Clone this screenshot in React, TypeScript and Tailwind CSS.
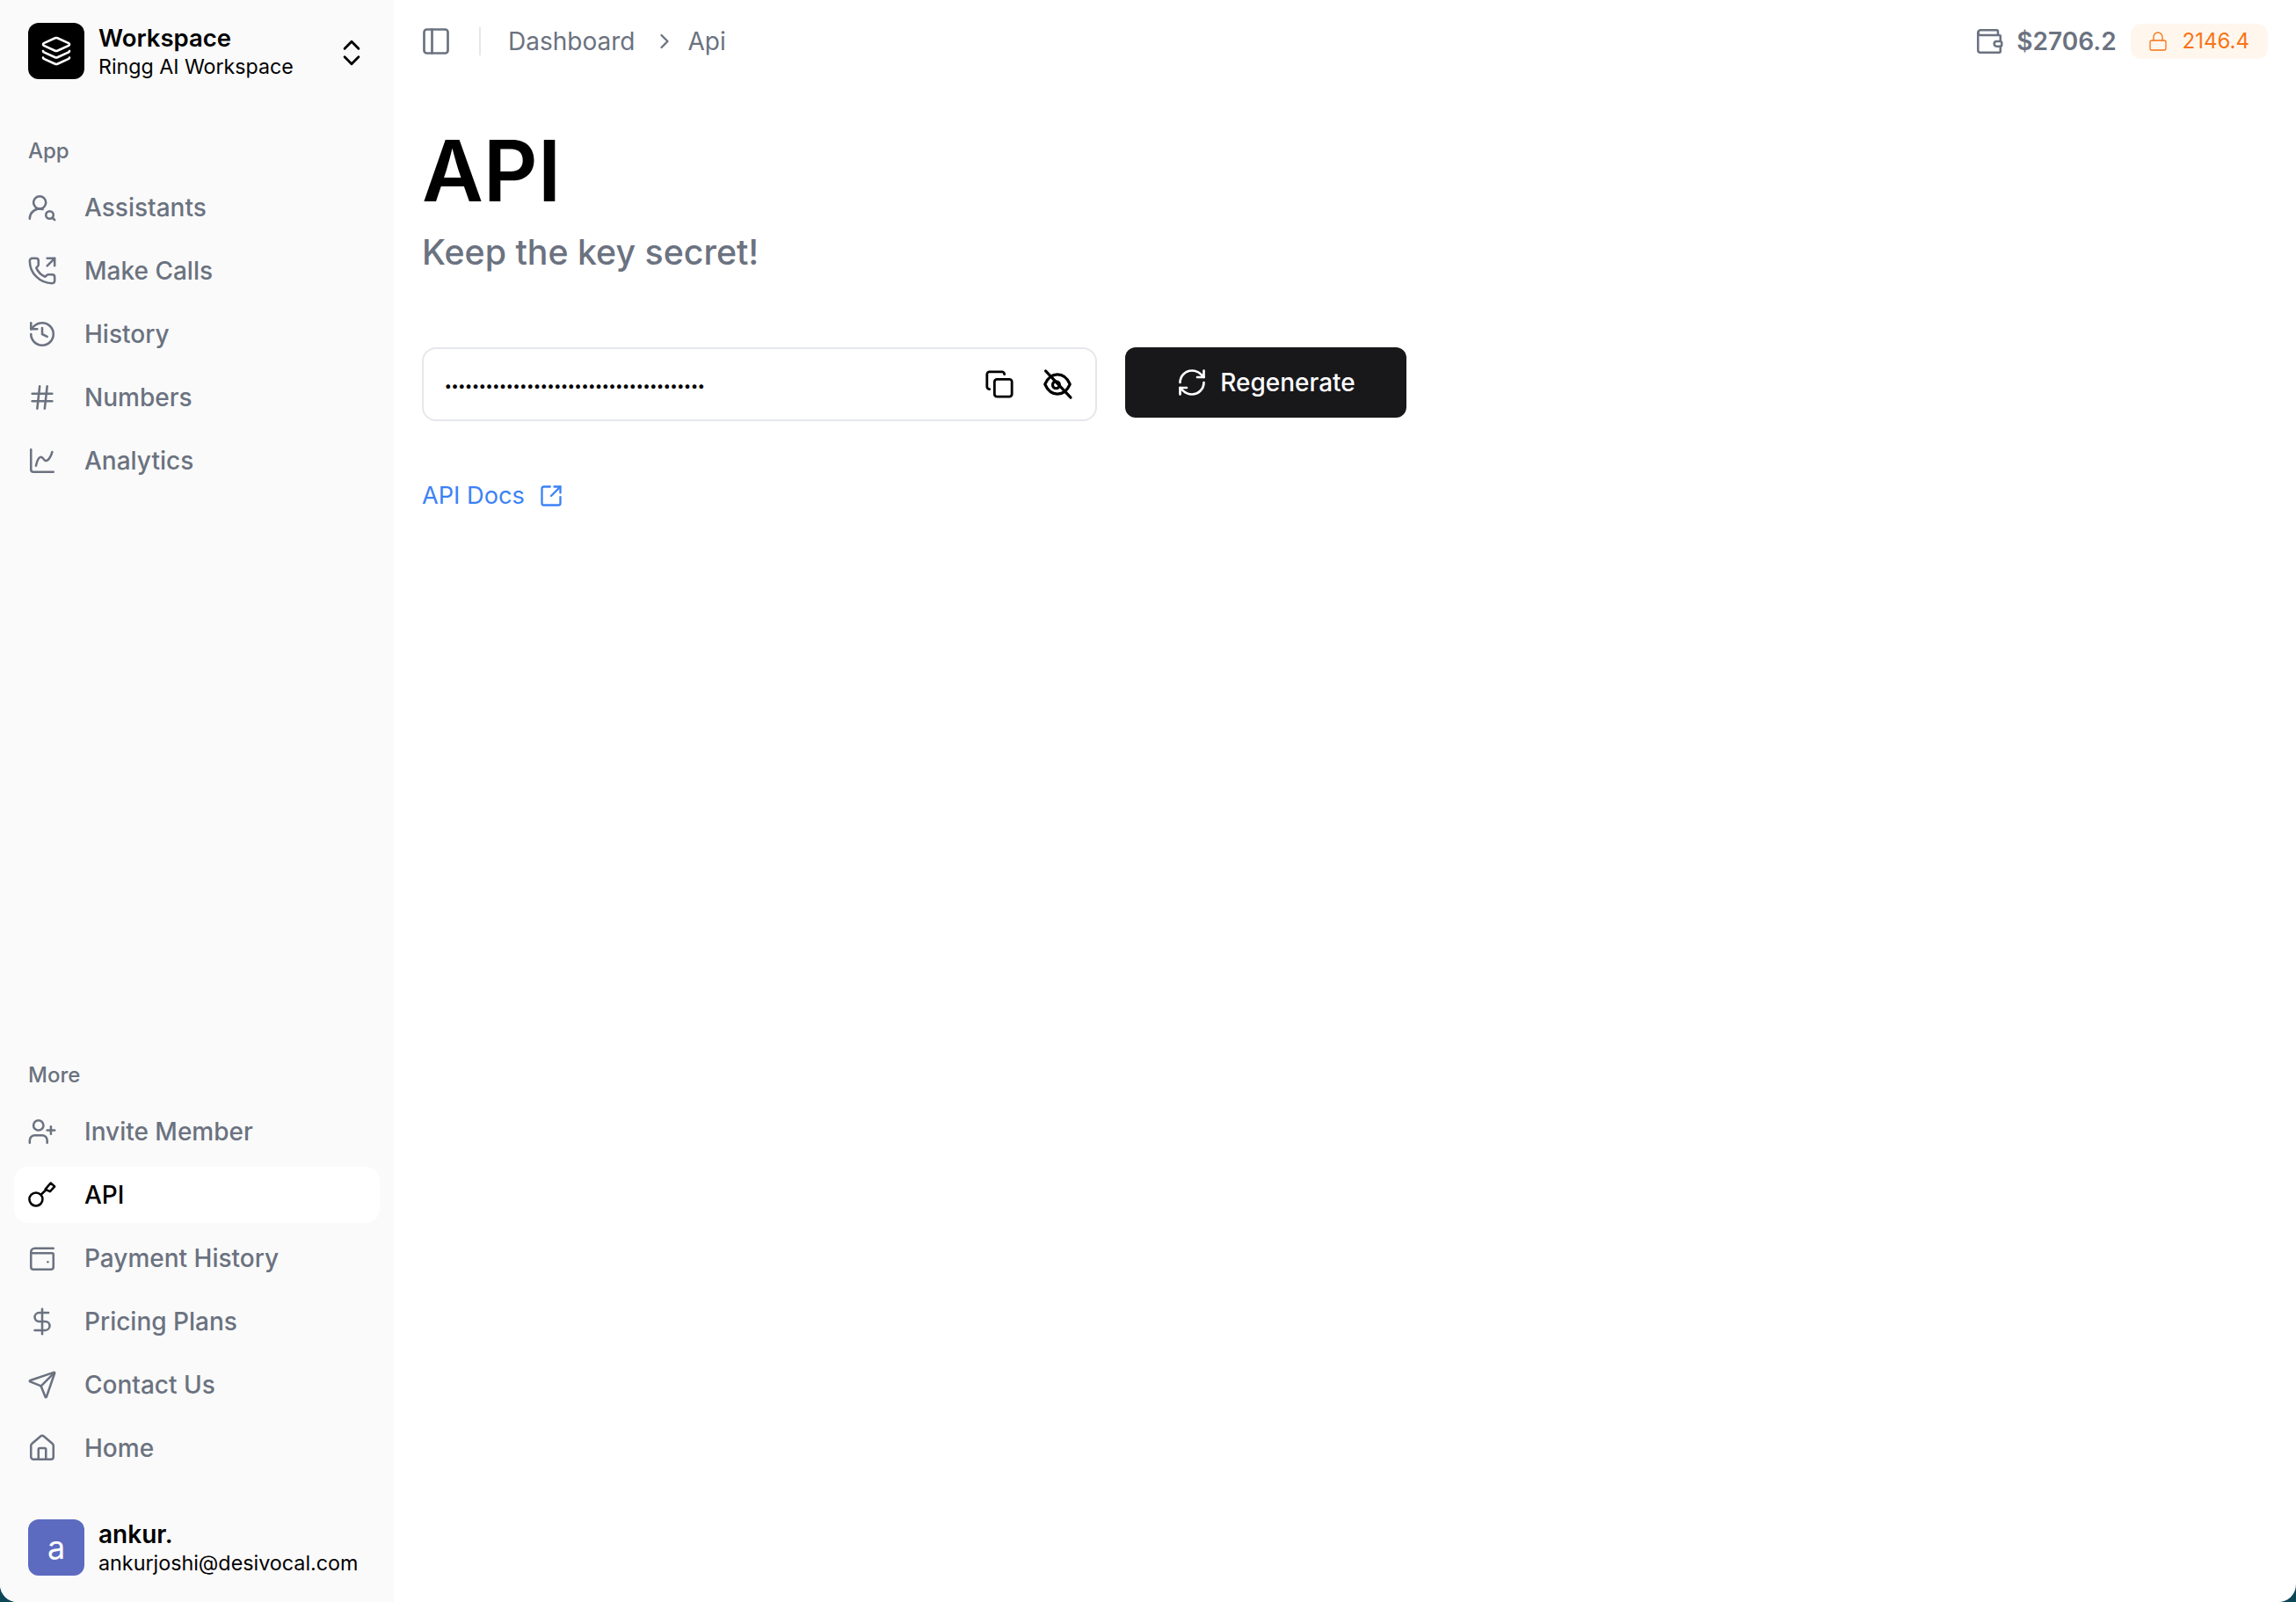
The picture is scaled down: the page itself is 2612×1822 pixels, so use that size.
import {
  ChartSpline,
  ChevronRight,
  ChevronsUpDown,
  Copy,
  DollarSign,
  Hash,
  History,
  House,
  Layers,
  Lock,
  PanelLeft,
  PhoneOutgoing,
  RefreshCw,
  Send,
  SquareArrowOutUpRight,
  UserPlus,
  UserRoundSearch,
  Wallet,
} from "lucide-react";
import type { ComponentType } from "react";

type IconProps = { className?: string; strokeWidth?: number };

type NavItem = {
  label: string;
  icon: ComponentType<IconProps>;
  active?: boolean;
};

// these three are not in the icon package in this shape
function KeyIcon({ className, strokeWidth = 2 }: IconProps) {
  return (
    <svg viewBox="0 0 24 24" fill="none" stroke="currentColor" strokeWidth={strokeWidth} strokeLinecap="round" strokeLinejoin="round" className={className}>
      <circle cx="7" cy="15.500" r="5.300" />
      <path d="M11 11.800 15 8" />
      <path d="M14.500 7.500 18.800 2.500 22 5.200 18.300 9.300z" />
    </svg>
  );
}

function PaymentIcon({ className, strokeWidth = 2 }: IconProps) {
  return (
    <svg viewBox="0 0 24 24" fill="none" stroke="currentColor" strokeWidth={strokeWidth} strokeLinecap="round" strokeLinejoin="round" className={className}>
      <path d="M21 4H6a3 3 0 0 0-3 3v12a2 2 0 0 0 2 2h14a2 2 0 0 0 2-2V9a1 1 0 0 0-1-1H4" />
      <path d="M16.500 15h.01" />
    </svg>
  );
}

function EyeSlashIcon({ className, strokeWidth = 2 }: IconProps) {
  return (
    <svg viewBox="0 0 24 24" fill="none" stroke="currentColor" strokeWidth={strokeWidth} strokeLinecap="round" strokeLinejoin="round" className={className}>
      <path d="M3 12c2-4.500 5.500-7 9-7s7 2.500 9 7c-2 4.500-5.500 7-9 7s-7-2.500-9-7z" />
      <circle cx="11" cy="12.500" r="2.500" />
      <path d="M3.500 2.500 21.500 21.500" />
    </svg>
  );
}

const appItems: NavItem[] = [
  { label: "Assistants", icon: UserRoundSearch },
  { label: "Make Calls", icon: PhoneOutgoing },
  { label: "History", icon: History },
  { label: "Numbers", icon: Hash },
  { label: "Analytics", icon: ChartSpline },
];

const moreItems: NavItem[] = [
  { label: "Invite Member", icon: UserPlus },
  { label: "API", icon: KeyIcon, active: true },
  { label: "Payment History", icon: PaymentIcon },
  { label: "Pricing Plans", icon: DollarSign },
  { label: "Contact Us", icon: Send },
  { label: "Home", icon: House },
];

function NavRow({ item }: { item: NavItem }) {
  const Icon = item.icon;
  return (
    <div
      className={
        item.active
          ? "flex h-16 items-center gap-[31px] rounded-2xl bg-white pl-[15px] text-black"
          : "flex h-16 items-center gap-[31px] rounded-2xl pl-[15px] text-[#6b7280]"
      }
    >
      <Icon className="h-[34px] w-[34px] shrink-0" strokeWidth={1.8} />
      <span className="text-[28px] leading-none font-medium">{item.label}</span>
    </div>
  );
}

function Sidebar() {
  return (
    <aside className="flex h-full w-[448px] shrink-0 flex-col bg-[#fafafa] px-4 pt-[26px] pb-[27px]">
      <div className="flex items-center pl-4">
        <div className="mb-[3px] flex h-[64px] w-[64px] items-center justify-center rounded-xl bg-black">
          <Layers className="h-9 w-9 text-white" strokeWidth={1.8} />
        </div>
        <div className="ml-4 flex flex-col">
          <span className="text-[27.5px] leading-[32px] font-semibold text-black">Workspace</span>
          <span className="text-[23.2px] leading-[34px] text-black">Ringg AI Workspace</span>
        </div>
        <ChevronsUpDown className="mr-[13px] ml-auto h-[38px] w-[38px] text-black" strokeWidth={1.8} />
      </div>

      <div className="mt-[63px] px-4 text-[24px] leading-[32px] font-medium text-[#6b7280]">App</div>
      <nav className="mt-[16px] flex flex-col gap-2">
        {appItems.map((item) => (
          <NavRow key={item.label} item={item} />
        ))}
      </nav>

      <div className="mt-auto px-4 text-[24px] leading-[32px] font-medium text-[#6b7280]">More</div>
      <nav className="mt-[16px] flex flex-col gap-2">
        {moreItems.map((item) => (
          <NavRow key={item.label} item={item} />
        ))}
      </nav>

      <div className="mt-[49px] flex items-center px-4">
        <div className="mb-[3px] flex h-[64px] w-[64px] items-center justify-center rounded-xl bg-[#5c6bc0] text-[36px] text-white">
          a
        </div>
        <div className="ml-4 flex flex-col">
          <span className="text-[28px] leading-[32px] font-semibold text-black">ankur.</span>
          <span className="text-[23.3px] leading-[33px] text-black">ankurjoshi@desivocal.com</span>
        </div>
      </div>
    </aside>
  );
}

function TopBar() {
  return (
    <header className="flex h-[94px] items-center justify-between pr-[32px]">
      <div className="flex items-center text-[#6b7280]">
        <PanelLeft className="ml-[-2px] h-9 w-9" strokeWidth={1.8} />
        <div className="ml-[31px] h-8 w-0.5 bg-[#e5e7eb]" />
        <span className="ml-[31px] text-[28px] leading-none">Dashboard</span>
        <ChevronRight className="ml-[20px] h-7 w-7" strokeWidth={2} />
        <span className="ml-[12px] text-[28px] leading-none">Api</span>
      </div>
      <div className="flex items-center">
        <Wallet className="h-[34px] w-[34px] text-[#6b7280]" strokeWidth={1.8} />
        <span className="ml-[14px] text-[28px] leading-none font-semibold text-[#6b7280]">$2706.2</span>
        <div className="ml-[16px] flex h-10 items-center gap-[16px] rounded-xl bg-[#fff7ed] pr-[21px] pl-[19px] text-[#f97316]">
          <Lock className="h-6 w-6" strokeWidth={1.3} />
          <span className="text-[24px] leading-none">2146.4</span>
        </div>
      </div>
    </header>
  );
}

export default function App() {
  return (
    <div className="h-[1822px] w-[2612px] bg-[#0d4657] font-['Inter',sans-serif]">
      <div className="flex h-full overflow-hidden rounded-b-[20px] bg-white">
        <Sidebar />
        <main className="flex-1 pl-[32px]">
          <TopBar />
          <h1 className="mt-[50px] text-[96px] leading-[100px] font-semibold text-black">API</h1>
          <p className="mt-[19px] text-[39.3px] leading-[48px] font-medium text-[#6b7280]">Keep the key secret!</p>
          <div className="mt-[84px] flex items-start gap-[32px]">
            <div className="flex h-[84px] w-[768px] items-center rounded-2xl border-2 border-[#e5e7eb] pr-[24px] pl-6">
              <span className="pt-[2px] text-[15px] leading-none font-semibold tracking-[0.23px] text-black">
                {"•".repeat(38)}
              </span>
              <Copy className="ml-auto h-[34px] w-[34px] text-black" strokeWidth={2} />
              <EyeSlashIcon className="ml-[30px] h-[38px] w-[38px] text-black" strokeWidth={2} />
            </div>
            <button className="flex h-[80px] w-[320px] items-center justify-center gap-[14px] rounded-xl bg-[#18181b] text-[28px] font-medium text-white">
              <RefreshCw className="h-9 w-9" strokeWidth={1.8} />
              Regenerate
            </button>
          </div>
          <div className="mt-[71px] flex items-center gap-[16px] text-[#3b82f6]">
            <span className="text-[27.2px] leading-none">API Docs</span>
            <SquareArrowOutUpRight className="h-7 w-7" strokeWidth={2} />
          </div>
        </main>
      </div>
    </div>
  );
}
